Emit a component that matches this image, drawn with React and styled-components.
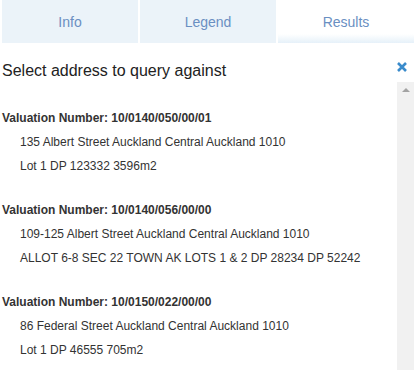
import React from "react";
import styled, { createGlobalStyle } from "styled-components";

const Global = createGlobalStyle`
  html, body { margin: 0; padding: 0; background: #fff; }
  body { font-family: "Liberation Sans", Arial, sans-serif; overflow: hidden; }
`;

const Page = styled.div`
  width: 414px;
  height: 370px;
  display: flex;
  flex-direction: column;
  overflow: hidden;
`;

const TabBar = styled.div`
  display: flex;
  gap: 2px;
  padding-left: 2px;
  height: 43px;
`;

const Tab = styled.div`
  flex: 1;
  display: flex;
  align-items: center;
  justify-content: center;
  font-size: 14px;
  color: #6a8fc2;
  background: ${(p) =>
    p.$active
      ? "linear-gradient(to bottom, #ffffff 0px, #ffffff 34px, #e6f1f9 43px)"
      : "#ebf3f9"};
`;

const Header = styled.div`
  display: flex;
  justify-content: space-between;
  align-items: flex-start;
  height: 39px;
  padding: 19px 0 0 2px;
  box-sizing: border-box;
`;

const Title = styled.div`
  font-size: 16px;
  line-height: 18px;
  color: #222;
`;

const Close = styled.button`
  border: 0;
  background: none;
  padding: 0;
  margin: -1px 6px 0 0;
  width: 12px;
  height: 12px;
  display: flex;
  cursor: pointer;
`;

const Body = styled.div`
  flex: 1;
  display: flex;
  min-height: 0;
`;

const List = styled.div`
  flex: 1;
  padding: 24px 0 0 2px;
`;

const Item = styled.div`
  margin-bottom: 20px;
`;

const ValLine = styled.div`
  font-size: 12px;
  line-height: 24px;
  font-weight: bold;
  color: #333;
`;

const DetailLine = styled.div`
  font-size: 12px;
  line-height: 24px;
  color: #333;
  padding-left: 18px;
`;

const Track = styled.div`
  width: 17px;
  background: #f1f1f1;
  display: flex;
  justify-content: center;
  padding-top: 6px;
  box-sizing: border-box;
`;

const Arrow = styled.div`
  width: 0;
  height: 0;
  border-left: 4px solid transparent;
  border-right: 4px solid transparent;
  border-bottom: 4px solid #a3a3a3;
`;

const items = [
  {
    num: "10/0140/050/00/01",
    addr: "135 Albert Street Auckland Central Auckland 1010",
    legal: "Lot 1 DP 123332 3596m2",
  },
  {
    num: "10/0140/056/00/00",
    addr: "109-125 Albert Street Auckland Central Auckland 1010",
    legal: "ALLOT 6-8 SEC 22 TOWN AK LOTS 1 & 2 DP 28234 DP 52242",
  },
  {
    num: "10/0150/022/00/00",
    addr: "86 Federal Street Auckland Central Auckland 1010",
    legal: "Lot 1 DP 46555 705m2",
  },
];

export default function App() {
  return (
    <Page>
      <Global />
      <TabBar>
        <Tab>Info</Tab>
        <Tab>Legend</Tab>
        <Tab $active>Results</Tab>
      </TabBar>
      <Header>
        <Title>Select address to query against</Title>
        <Close aria-label="Close">
          <svg width="12" height="12" viewBox="0 0 12 12">
            <path d="M2 2 L10 10 M10 2 L2 10" stroke="#3a8bcb" strokeWidth="2.6" strokeLinecap="butt" />
          </svg>
        </Close>
      </Header>
      <Body>
        <List>
          {items.map((it) => (
            <Item key={it.num}>
              <ValLine>Valuation Number: {it.num}</ValLine>
              <DetailLine>{it.addr}</DetailLine>
              <DetailLine>{it.legal}</DetailLine>
            </Item>
          ))}
        </List>
        <Track>
          <Arrow />
        </Track>
      </Body>
    </Page>
  );
}
